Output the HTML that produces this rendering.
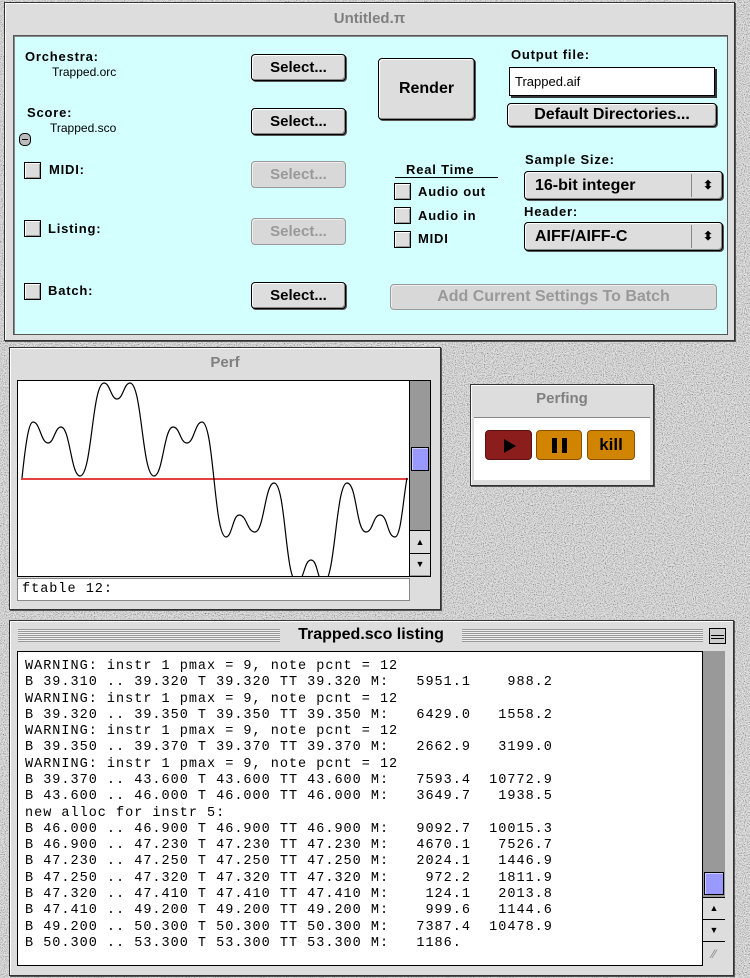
<!DOCTYPE html>
<html><head><meta charset="utf-8"><style>
*{box-sizing:border-box;margin:0;padding:0}
body{width:750px;height:978px;position:relative;overflow:hidden;background:#bcbcbc;font-family:"Liberation Sans",sans-serif}
.a{position:absolute}
.b{font-weight:bold;font-size:13px;letter-spacing:0.8px;color:#000}
.n{font-size:12px;color:#000}
.btn{position:absolute;background:#ddd;border:1px solid #000;border-radius:4px;box-shadow:inset 1px 1px 0 #fff,inset -1px -1px 0 #888,1px 1px 0 #555;font-weight:bold;font-size:15px;text-align:center;color:#000}
.dis{border-color:#999;color:#999;box-shadow:inset 1px 1px 0 #eee;background:#d8d8d8}
.cb{position:absolute;width:17px;height:17px;border:1px solid #000;background:#ddd;box-shadow:inset 1px 1px 0 #fff,inset -1px -1px 0 #999}
.win{position:absolute;background:#ddd;border:1px solid #333;box-shadow:1px 1px 0 #555,inset 1px 1px 0 #fff}
.tt{position:absolute;left:0;right:0;text-align:center;font-weight:bold;font-size:15px;color:#808080}
.pop{position:absolute;background:#ddd;border:1px solid #000;border-radius:4px;box-shadow:inset 1px 1px 0 #fff,inset -1px -1px 0 #888,1px 1px 0 #555;font-weight:bold;font-size:16px;padding-left:10px}
.pop:after{content:"";position:absolute;right:30px;top:2px;bottom:2px;border-left:1px solid #888}
pre{font-family:"Liberation Mono",monospace;font-size:13.5px;letter-spacing:1px;line-height:16.28px;color:#000}
.sb{position:absolute;background:#999;border-left:1px solid #000}
.arr{position:absolute;width:100%;background:#ddd;border-top:1px solid #000;font-size:9px;text-align:center}
.thumb{position:absolute;left:1px;right:1px;background:#99f;border:1px solid #000;box-shadow:inset 1px 1px 0 #ccf}
</style></head><body>
<svg class="a" style="left:0;top:0" width="750" height="978">
<filter id="g"><feTurbulence type="fractalNoise" baseFrequency="0.9" numOctaves="2" seed="5"/><feColorMatrix type="matrix" values="2.2 0 0 0 -0.35 2.2 0 0 0 -0.35 2.2 0 0 0 -0.35 0 0 0 0 1"/></filter>
<rect width="750" height="978" fill="#bbb"/><rect width="750" height="978" filter="url(#g)" opacity="0.6"/></svg>

<!-- main window -->
<div class="win" style="left:4px;top:2px;width:731px;height:339px">
<div class="tt" style="top:7px">Untitled.π</div>
<div class="a" style="left:8px;top:32px;width:715px;height:300px;background:#d4ffff;border:1px solid #555;box-shadow:inset 1px 1px 0 #888"></div>
</div>
<div class="a b" style="left:25px;top:49px">Orchestra:</div>
<div class="a n" style="left:52px;top:65px">Trapped.orc</div>
<div class="a b" style="left:27px;top:105px">Score:</div>
<div class="a n" style="left:50px;top:121px">Trapped.sco</div>
<div class="a" style="left:19px;top:133px;width:12px;height:13px;border:1px solid #000;border-radius:5px;background:#bbb"><div class="a" style="left:2px;top:5px;width:6px;height:1px;background:#000"></div></div>
<div class="cb" style="left:24px;top:162px"></div><div class="a b" style="left:49px;top:162px">MIDI:</div>
<div class="cb" style="left:24px;top:220px"></div><div class="a b" style="left:48px;top:221px">Listing:</div>
<div class="cb" style="left:24px;top:283px"></div><div class="a b" style="left:48px;top:283px">Batch:</div>
<div class="btn" style="left:251px;top:54px;width:95px;height:27px;line-height:25px">Select...</div>
<div class="btn" style="left:251px;top:108px;width:95px;height:27px;line-height:25px">Select...</div>
<div class="btn dis" style="left:251px;top:161px;width:95px;height:27px;line-height:25px">Select...</div>
<div class="btn dis" style="left:251px;top:218px;width:95px;height:27px;line-height:25px">Select...</div>
<div class="btn" style="left:251px;top:282px;width:95px;height:27px;line-height:25px">Select...</div>
<div class="btn" style="left:378px;top:58px;width:97px;height:62px;line-height:60px;font-size:16px">Render</div>
<div class="a b" style="left:511px;top:47px">Output file:</div>
<div class="a" style="left:509px;top:67px;width:206px;height:29px;background:#fff;border:1px solid #000;box-shadow:2px 2px 0 #333;font-size:13px;padding:6px 0 0 5px">Trapped.aif</div>
<div class="btn" style="left:507px;top:103px;width:210px;height:24px;line-height:22px;font-size:16px">Default Directories...</div>
<div class="a b" style="left:406px;top:162px">Real Time</div>
<div class="a" style="left:395px;top:177px;width:103px;height:1px;background:#000"></div>
<div class="cb" style="left:394px;top:183px"></div><div class="a b" style="left:418px;top:184px">Audio out</div>
<div class="cb" style="left:394px;top:207px"></div><div class="a b" style="left:418px;top:208px">Audio in</div>
<div class="cb" style="left:394px;top:231px"></div><div class="a b" style="left:418px;top:231px">MIDI</div>
<div class="a b" style="left:525px;top:152px">Sample Size:</div>
<div class="pop" style="left:524px;top:171px;width:199px;height:29px;line-height:27px">16-bit integer<span class="a" style="right:9px;top:0;font-size:12px">⬍</span></div>
<div class="a b" style="left:524px;top:204px">Header:</div>
<div class="pop" style="left:524px;top:222px;width:199px;height:29px;line-height:27px">AIFF/AIFF-C<span class="a" style="right:9px;top:0;font-size:12px">⬍</span></div>
<div class="btn dis" style="left:390px;top:284px;width:327px;height:26px;line-height:24px;font-size:16px">Add Current Settings To Batch</div>

<!-- Perf window -->
<div class="win" style="left:9px;top:347px;width:432px;height:263px">
<div class="tt" style="top:6px">Perf</div>
</div>
<div class="a" style="left:17px;top:380px;width:414px;height:197px;background:#fff;border:1px solid #000"></div>
<svg class="a" style="left:0;top:0" width="450" height="620">
<clipPath id="c"><rect x="19" y="381" width="390" height="195"/></clipPath>
<line x1="21" y1="479" x2="408" y2="479" stroke="#d00" stroke-width="1.5"/>
<path clip-path="url(#c)" fill="none" stroke="#000" stroke-width="1.2" d="M22 478 C26 440 29 422 33 422 C40 422 41 443 48 443 C54 443 55 427 61 427 C70 427 71 476 80 476 C92 476 92 383 104 383 C110 383 111 399 117 399 C123 399 124 383 130 383 C142 383 142 476 154 476 C163 476 164 427 173 427 C180 427 180 443 187 443 C194 443 195 422 202 422 C214 422 214 537 226 537 C232 537 233 515 239 515 C247 515 247 532 255 532 C264 532 265 483 274 483 C286 483 285 582 297 582 C304 582 304 560 311 560 C318 560 317 582 324 582 C335 582 336 483 347 483 C357 483 356 532 366 532 C373 532 373 515 380 515 C388 515 387 537 395 537 C401 537 403 500 407 478"/>
</svg>
<div class="sb" style="left:409px;top:381px;width:21px;height:195px">
<div class="thumb" style="top:66px;height:24px"></div>
<div class="arr" style="top:149px;height:23px;line-height:22px">▲</div>
<div class="arr" style="top:172px;height:22px;line-height:21px">▼</div>
</div>
<div class="a" style="left:17px;top:578px;width:393px;height:23px;background:#fff;border:1px solid #888"></div>
<pre class="a" style="left:22px;top:582px">ftable 12:</pre>

<!-- Perfing -->
<div class="win" style="left:470px;top:384px;width:184px;height:102px">
<div class="tt" style="top:5px">Perfing</div>
<div class="a" style="left:3px;top:32px;width:176px;height:63px;background:#fff;border-top:1px solid #888"></div>
</div>
<div class="a" style="left:485px;top:430px;width:47px;height:30px;background:#8b1d1d;border:1px solid #5a1010;border-radius:4px"><div class="a" style="left:18px;top:8px;border-left:12px solid #000;border-top:7px solid transparent;border-bottom:7px solid transparent"></div></div>
<div class="a" style="left:536px;top:430px;width:46px;height:30px;background:#d08400;border:1px solid #8a5000;border-radius:4px"><div class="a" style="left:15px;top:7px;width:5px;height:15px;background:#000"></div><div class="a" style="left:25px;top:7px;width:5px;height:15px;background:#000"></div></div>
<div class="a" style="left:587px;top:430px;width:48px;height:30px;background:#d08400;border:1px solid #8a5000;border-radius:4px;font-weight:bold;font-size:17px;text-align:center;line-height:27px">kill</div>

<!-- listing -->
<div class="win" style="left:9px;top:620px;width:725px;height:356px">
<div class="a" style="left:8px;top:8px;right:30px;height:13px;background:repeating-linear-gradient(#999 0 1px,#eee 1px 2px)"></div>
<div class="a" style="left:270px;top:2px;width:182px;height:24px;background:#ddd;text-align:center;font-weight:bold;font-size:16px;line-height:24px">Trapped.sco listing</div>
<div class="a" style="left:699px;top:7px;width:17px;height:16px;border:1px solid #000;background:#ccc"><div class="a" style="left:1px;right:1px;top:6px;height:1px;background:#000"></div><div class="a" style="left:1px;right:1px;top:9px;height:1px;background:#000"></div></div>
</div>
<div class="a" style="left:17px;top:651px;width:686px;height:315px;background:#fff;border:1px solid #000"></div>
<pre class="a" style="left:25px;top:659px">WARNING: instr 1 pmax = 9, note pcnt = 12
B 39.310 .. 39.320 T 39.320 TT 39.320 M:   5951.1    988.2
WARNING: instr 1 pmax = 9, note pcnt = 12
B 39.320 .. 39.350 T 39.350 TT 39.350 M:   6429.0   1558.2
WARNING: instr 1 pmax = 9, note pcnt = 12
B 39.350 .. 39.370 T 39.370 TT 39.370 M:   2662.9   3199.0
WARNING: instr 1 pmax = 9, note pcnt = 12
B 39.370 .. 43.600 T 43.600 TT 43.600 M:   7593.4  10772.9
B 43.600 .. 46.000 T 46.000 TT 46.000 M:   3649.7   1938.5
new alloc for instr 5:
B 46.000 .. 46.900 T 46.900 TT 46.900 M:   9092.7  10015.3
B 46.900 .. 47.230 T 47.230 TT 47.230 M:   4670.1   7526.7
B 47.230 .. 47.250 T 47.250 TT 47.250 M:   2024.1   1446.9
B 47.250 .. 47.320 T 47.320 TT 47.320 M:    972.2   1811.9
B 47.320 .. 47.410 T 47.410 TT 47.410 M:    124.1   2013.8
B 47.410 .. 49.200 T 49.200 TT 49.200 M:    999.6   1144.6
B 49.200 .. 50.300 T 50.300 TT 50.300 M:   7387.4  10478.9
B 50.300 .. 53.300 T 53.300 TT 53.300 M:   1186.</pre>
<div class="sb" style="left:702px;top:651px;width:23px;height:290px">
<div class="thumb" style="top:221px;height:23px"></div>
<div class="arr" style="top:246px;height:22px;line-height:21px">▲</div>
<div class="arr" style="top:268px;height:22px;line-height:21px">▼</div>
</div>
<div class="a" style="left:702px;top:941px;width:23px;height:25px;background:#ddd;border-left:1px solid #000;border-top:1px solid #000;color:#888;font-size:12px;text-align:center;line-height:24px">⁄⁄</div>
</body></html>
